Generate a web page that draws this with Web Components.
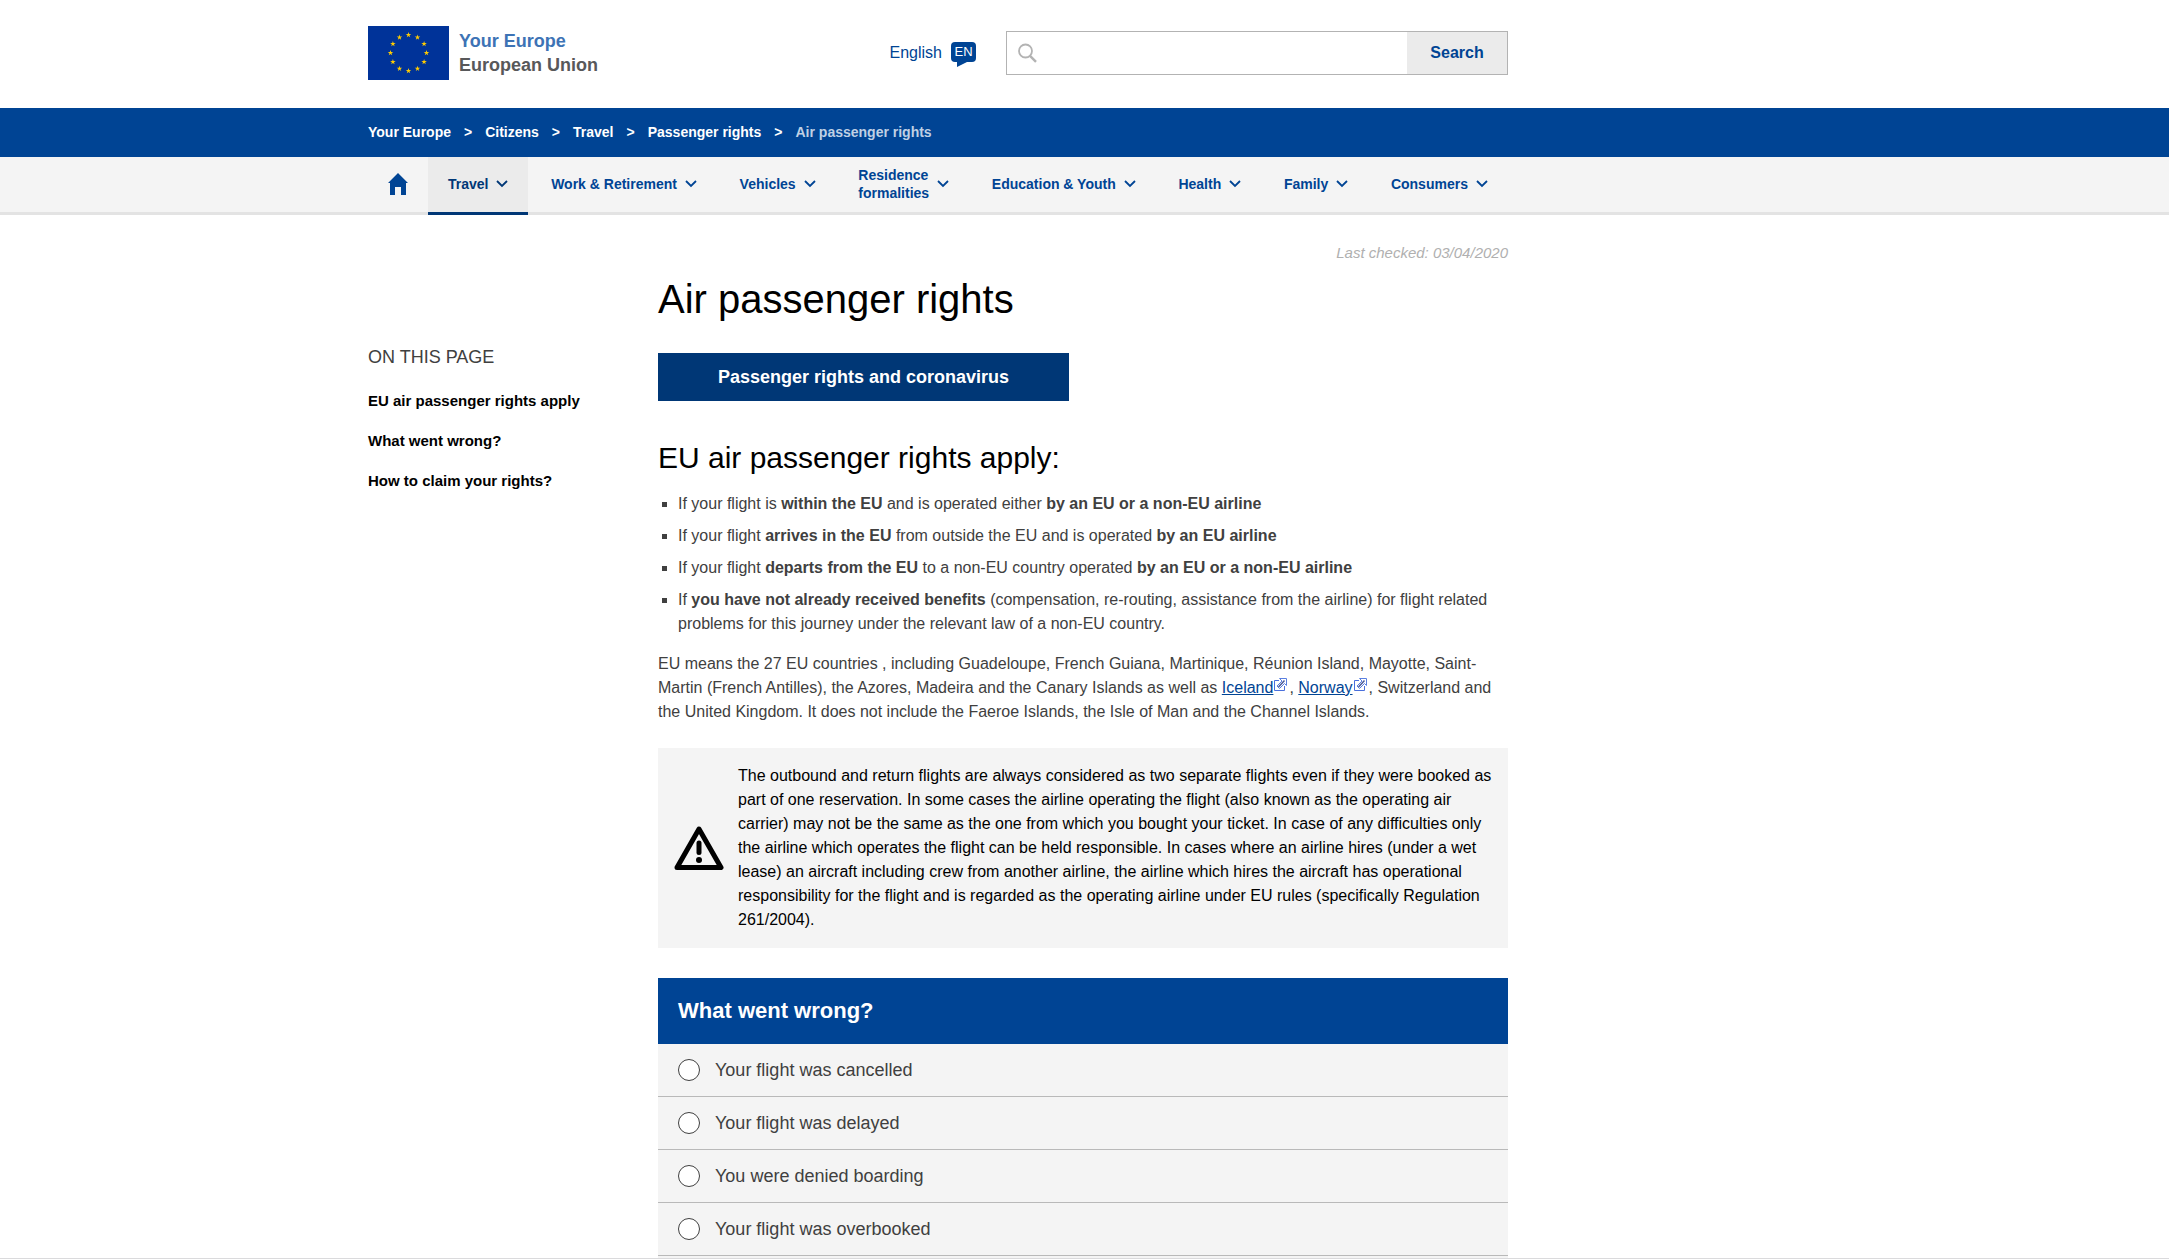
<!DOCTYPE html>
<html lang="en">
<head>
<meta charset="utf-8">
<title>Air passenger rights - Your Europe</title>
<style>
  :root {
    --blue: #004494;
    --navy: #003776;
    --text: #404040;
    --panel: #f4f4f4;
    --line: #b9b9b9;
    --side: 293px;
  }
  * { box-sizing: border-box; }
  body {
    margin: 0;
    height: 100vh;
    overflow: hidden;
    border-bottom: 1px solid #dadadc;
    background: #fff;
    color: var(--text);
    font: 16px/24px "Liberation Sans", Arial, sans-serif;
  }
  p { margin: 0; }
  eu-article a { color: var(--blue); }
</style>
</head>
<body>
<eu-header></eu-header>
<eu-breadcrumb>
  <a href="#">Your Europe</a>
  <a href="#">Citizens</a>
  <a href="#">Travel</a>
  <a href="#">Passenger rights</a>
  <span>Air passenger rights</span>
</eu-breadcrumb>
<eu-nav>
  <eu-nav-item active>Travel</eu-nav-item>
  <eu-nav-item>Work &amp; Retirement</eu-nav-item>
  <eu-nav-item>Vehicles</eu-nav-item>
  <eu-nav-item>Residence<br>formalities</eu-nav-item>
  <eu-nav-item>Education &amp; Youth</eu-nav-item>
  <eu-nav-item>Health</eu-nav-item>
  <eu-nav-item>Family</eu-nav-item>
  <eu-nav-item>Consumers</eu-nav-item>
</eu-nav>
<eu-layout>
  <eu-toc slot="aside">
    <a href="#apply">EU air passenger rights apply</a>
    <a href="#wrong">What went wrong?</a>
    <a href="#claim">How to claim your rights?</a>
  </eu-toc>
  <eu-article>
    <span slot="date">Last checked: 03/04/2020</span>
    <span slot="title">Air passenger rights</span>
    <span slot="cta">Passenger rights and coronavirus</span>
    <span slot="heading" id="apply">EU air passenger rights apply:</span>
    <eu-bullet slot="list">If your flight is <b>within the EU</b> and is operated either <b>by an EU or a non-EU airline</b></eu-bullet>
    <eu-bullet slot="list">If your flight <b>arrives in the EU</b> from outside the EU and is operated <b>by an EU airline</b></eu-bullet>
    <eu-bullet slot="list">If your flight <b>departs from the EU</b> to a non-EU country operated <b>by an EU or a non-EU airline</b></eu-bullet>
    <eu-bullet slot="list">If <b>you have not already received benefits</b> (compensation, re-routing, assistance from the airline) for flight related problems for this journey under the relevant law of a non-EU country.</eu-bullet>
    <p>EU means the 27 EU countries , including Guadeloupe, French Guiana, Martinique, Réunion Island, Mayotte, Saint-Martin (French Antilles), the Azores, Madeira and the Canary Islands as well as <a href="#">Iceland</a><eu-external-icon></eu-external-icon>, <a href="#">Norway</a><eu-external-icon></eu-external-icon>, Switzerland and the United Kingdom. It does not include the Faeroe Islands, the Isle of Man and the Channel Islands.</p>
    <eu-notice>The outbound and return flights are always considered as two separate flights even if they were booked as part of one reservation. In some cases the airline operating the flight (also known as the operating air carrier) may not be the same as the one from which you bought your ticket. In case of any difficulties only the airline which operates the flight can be held responsible. In cases where an airline hires (under a wet lease) an aircraft including crew from another airline, the airline which hires the aircraft has operational responsibility for the flight and is regarded as the operating airline under EU rules (specifically Regulation 261/2004).</eu-notice>
    <eu-wizard id="wrong">What went wrong?</eu-wizard>
  </eu-article>
</eu-layout>

<script>
  const shared = `
    * { box-sizing: border-box; }
    :host { display: block; }
    .wrap { padding-right: var(--side); }
    .inner { max-width: 1140px; margin: 0 auto; }
    a { color: inherit; text-decoration: none; }
    svg { display: block; flex: none; }
  `;

  function define(name, css, html) {
    customElements.define(name, class extends HTMLElement {
      constructor() {
        super();
        const root = this.attachShadow({ mode: 'open' });
        root.innerHTML = `<style>${shared}${css}</style>${typeof html === 'function' ? html() : html}`;
      }
    });
  }

  // Five-pointed star centred on (cx, cy) with outer radius r.
  function star(cx, cy, r) {
    const pts = [];
    for (let i = 0; i < 10; i++) {
      const a = Math.PI * i / 5 - Math.PI / 2;
      const k = i % 2 ? r * 0.382 : r;
      pts.push((cx + k * Math.cos(a)).toFixed(2) + ',' + (cy + k * Math.sin(a)).toFixed(2));
    }
    return `<polygon points="${pts.join(' ')}"/>`;
  }

  function flag() {
    let stars = '';
    for (let i = 0; i < 12; i++) {
      const a = Math.PI * i / 6;
      stars += star(40.5 + 18 * Math.sin(a), 27 - 18 * Math.cos(a), 2.9);
    }
    return `<svg width="81" height="54" viewBox="0 0 81 54" aria-hidden="true"><rect width="81" height="54" fill="#039"/><g fill="#fc0">${stars}</g></svg>`;
  }

  define('eu-header', `
    .inner { display: flex; align-items: flex-start; justify-content: space-between; height: 108px; }
    .logo { display: flex; align-items: center; gap: 10px; margin-top: 26px; height: 54px; font-weight: bold; font-size: 18px; color: #58585a; }
    .logo strong { display: block; color: #3d73b5; }
    .tools { display: flex; align-items: center; gap: 30px; margin-top: 31px; }
    .lang { display: flex; align-items: center; gap: 9px; color: var(--blue); height: 44px; }
    .badge { display: grid; place-items: center; width: 25px; height: 20px; background: var(--blue); color: #fff; border-radius: 4px; font-size: 13px; line-height: 20px; }
    .bubble { display: block; padding-top: 3px; }
    form { display: flex; width: 502px; height: 44px; border: 1px solid #b3b3b3; }
    label { display: flex; flex: 1; align-items: center; gap: 8px; padding-left: 11px; }
    input { flex: 1; min-width: 0; height: 100%; border: 0; outline: 0; font: inherit; background: transparent; }
    button { width: 100px; border: 0; background: #ebebeb; color: var(--blue); font: bold 16px/24px "Liberation Sans", Arial, sans-serif; }
  `, () => `
    <header class="wrap"><div class="inner">
      <a class="logo" href="#">${flag()}<span><strong>Your Europe</strong>European Union</span></a>
      <div class="tools">
        <a class="lang" href="#">English
          <span class="bubble"><span class="badge">EN</span>
            <svg width="25" height="5" viewBox="0 0 25 5"><path d="M6 0H16L6 5z" fill="#004494"/></svg></span></a>
        <form role="search">
          <label aria-label="Search terms">
            <svg width="20" height="20" viewBox="0 0 20 20" fill="none" stroke="#b3b3b3"><circle cx="7.500" cy="8" r="6.500" stroke-width="1.800"/><path d="M12 12.800L18 18.800" stroke-width="2.500"/></svg>
            <input type="search">
          </label>
          <button type="button">Search</button>
        </form>
      </div>
    </div></header>`);

  define('eu-breadcrumb', `
    :host { background: var(--blue); color: #fff; font-weight: bold; font-size: 14px; }
    .inner { display: flex; height: 49px; align-items: center; padding-bottom: 2px; }
    ::slotted(*) { color: #fff; text-decoration: none; }
    ::slotted(a)::after { content: ">"; padding: 0 13px; }
    ::slotted(span) { color: #bfd0e4; }
  `, `<nav class="wrap" aria-label="Breadcrumb"><div class="inner"><slot></slot></div></nav>`);

  define('eu-nav', `
    :host { background: linear-gradient(var(--panel) 55px, #e3e3e3 55px); }
    .inner { display: flex; height: 58px; }
    .home { display: grid; place-items: center; width: 60px; height: 54px; color: var(--blue); }
    .items { display: flex; flex: 1; justify-content: space-between; }
  `, `<nav class="wrap" aria-label="Main"><div class="inner">
      <a class="home" href="#" aria-label="Home"><svg width="20" height="22" viewBox="0 0 20 22"><path d="M10 0L0 10H2V22H7V14H13V22H18V10H20z" fill="currentColor"/></svg></a>
      <div class="items"><slot></slot></div></div></nav>`);

  define('eu-nav-item', `
    a { display: flex; align-items: center; gap: 8px; height: 58px; padding: 0 20px 2px; border-bottom: 3px solid transparent; color: var(--blue); font: bold 14px/18px "Liberation Sans", Arial, sans-serif; white-space: nowrap; }
    :host([active]) a { background: #ebebeb; background-clip: padding-box; border-color: var(--navy); color: var(--navy); }
  `, `<a href="#"><span><slot></slot></span><svg width="12" height="8" viewBox="0 0 12 8"><path d="M1 1L6 6L11 1" fill="none" stroke="currentColor" stroke-width="1.800"/></svg></a>`);

  define('eu-layout', `
    .inner { display: flex; }
    aside { width: 290px; flex: none; padding-top: 130px; }
    main { flex: 1; min-width: 0; padding-top: 26px; }
  `, `<div class="wrap"><div class="inner"><aside><slot name="aside"></slot></aside><main><slot></slot></main></div></div>`);

  define('eu-toc', `
    h2 { margin: 0 0 20px; font-weight: normal; font-size: 18px; line-height: 24px; text-transform: uppercase; }
    nav { display: flex; flex-direction: column; gap: 16px; }
    ::slotted(a) { color: #000; font-weight: bold; font-size: 15px; text-decoration: none; }
  `, `<h2>On this page</h2><nav><slot></slot></nav>`);

  define('eu-article', `
    .date { font-size: 15px; font-style: italic; color: #b0b0b0; text-align: right; }
    h1 { margin: 10px 0 30px; font-weight: normal; font-size: 40px; line-height: 48px; color: #000; }
    .cta { display: inline-block; vertical-align: top; padding: 12px 60px; background: var(--navy); color: #fff; font-weight: bold; font-size: 18px; }
    h2 { margin: 39px 0 16px; font-weight: normal; font-size: 30px; line-height: 36px; color: #000; }
    .list { display: flex; flex-direction: column; gap: 8px; margin-bottom: 16px; }
  `, `
    <div class="date"><slot name="date"></slot></div>
    <h1><slot name="title"></slot></h1>
    <a class="cta" href="#"><slot name="cta"></slot></a>
    <h2><slot name="heading"></slot></h2>
    <div class="list" role="list"><slot name="list"></slot></div>
    <slot></slot>`);

  define('eu-bullet', `
    :host { display: flex; }
    i { flex: none; width: 5px; height: 5px; margin: 10px 11px 0 4px; background: currentColor; }
  `, `<i></i><div role="listitem"><slot></slot></div>`);

  define('eu-external-icon', `
    :host { display: inline-block; width: 13px; height: 13px; margin: 0 2px 0 1px; vertical-align: 2px; }
  `, `<svg width="13" height="13" viewBox="0 0 13 13" fill="none" stroke="#4a6fdc"><path d="M5 2.500H.5V12.500H10.500V8"/><path d="M5.500 .5H12.500V7.500L10.500 5.500L5.500 10.500L3 8L8 3z" fill="#fff" stroke="#5a7fe0"/><path d="M4.500 9L10.500 2.500" stroke="#4a5a98" stroke-width="1.500"/></svg>`);

  define('eu-notice', `
    :host { margin: 24px 0 30px; }
    .box { display: flex; align-items: center; gap: 14px; padding: 16px; background: var(--panel); color: #000; }
  `, `<div class="box" role="note"><svg width="50" height="44" viewBox="0 0 50 44"><path d="M25 3L47 41.500H3z" fill="none" stroke="#000" stroke-width="5" stroke-linejoin="round"/><path d="M25 17V26.500" stroke="#000" stroke-width="5" stroke-linecap="round"/><circle cx="25" cy="34" r="3" fill="#000"/></svg><div><slot></slot></div></div>`);

  const options = ['Your flight was cancelled', 'Your flight was delayed', 'You were denied boarding', 'Your flight was overbooked'];
  define('eu-wizard', `
    h2 { margin: 0; padding: 21px 20px; background: var(--blue); color: #fff; font-size: 22px; line-height: 24px; }
    .rows { background: var(--panel); padding-bottom: 20px; }
    label { display: flex; align-items: center; gap: 15px; height: 53px; padding: 0 20px; border-bottom: 1px solid var(--line); font-size: 18px; }
    input { appearance: none; flex: none; width: 22px; height: 22px; margin: 0; border: 1px solid var(--text); border-radius: 50%; background: #fff; }
    input:checked { box-shadow: inset 0 0 0 5px #fff; background: var(--blue); }
  `, `<h2><slot></slot></h2><div class="rows" role="radiogroup">${options.map((t, i) => `<label for="o${i}"><input type="radio" name="problem" id="o${i}">${t}</label>`).join('')}</div>`);
</script>
</body>
</html>
